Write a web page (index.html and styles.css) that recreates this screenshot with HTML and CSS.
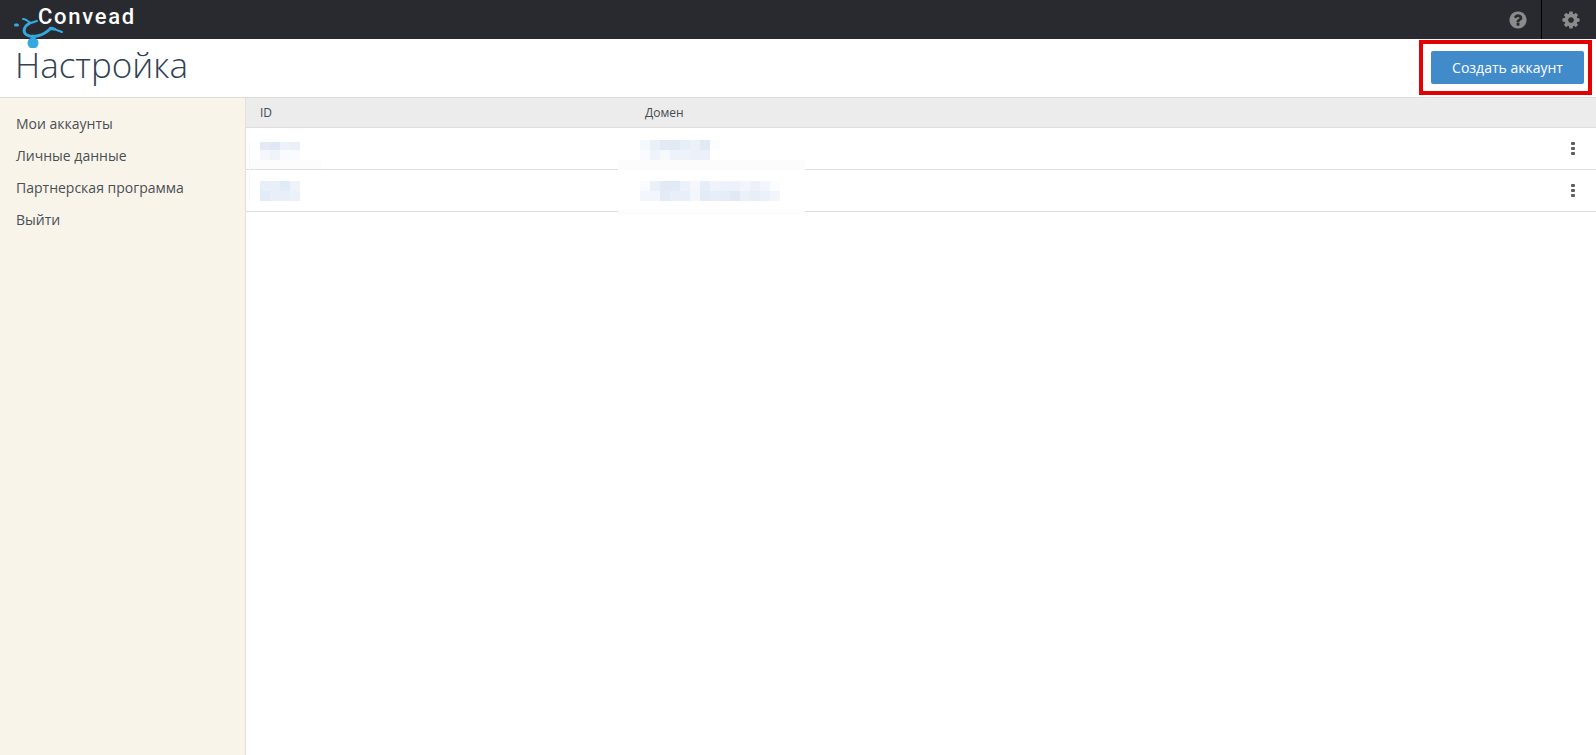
FILE: index.html
```html
<!DOCTYPE html>
<html lang="ru">
<head>
<meta charset="utf-8">
<title>Настройка</title>
<link rel="stylesheet" href="styles.css">
</head>
<body>
<header class="topbar">
  <a class="logo">
    <svg class="logo-mark" width="56" height="48" viewBox="0 0 56 48">
      <g class="logo-strokes">
        <path d="M4.5 25h2"/>
        <path d="M12 19c3 0 5 2 7 4 2 0 4-1 7-2" class="thin"/>
        <path d="M19 23c-6 3-8 9-3 12 6 3 16 1 23-6"/>
        <path d="M39 29c4 0 8 1 12 3" class="thin"/>
        <path d="M39 28c1-1 3 0 5 1" class="thin"/>
        <path d="M22 36v6"/>
      </g>
      <circle class="logo-dot" cx="22" cy="43" r="5.5"/>
    </svg>
    <span class="logo-text">Convead</span>
  </a>
  <div class="top-actions">
    <div class="top-btn">
      <svg width="20" height="20" viewBox="0 0 1792 1792"><path d="M1024 1376v-192q0-14-9-23t-23-9h-192q-14 0-23 9t-9 23v192q0 14 9 23t23 9h192q14 0 23-9t9-23zm256-672q0-88-55.5-163t-138.5-116-170-41q-243 0-371 213-15 24 8 42l132 100q7 6 19 6 16 0 25-12 53-68 86-92 34-24 86-24 48 0 85.5 26t37.5 59q0 38-20 61t-68 45q-63 28-115.5 86.5t-52.5 125.5v36q0 14 9 23t23 9h192q14 0 23-9t9-23q0-19 21.5-49.5t54.5-49.5q32-18 49-28.5t46-35 44.5-48 28-60.5 12.5-81zm384 192q0 209-103 385.5t-279.5 279.5-385.5 103-385.5-103-279.5-279.5-103-385.5 103-385.5 279.5-279.5 385.5-103 385.5 103 279.5 279.5 103 385.5z"/></svg>
    </div>
    <div class="top-btn top-btn-last">
      <svg width="20" height="20" viewBox="0 0 1792 1792"><path d="M1152 896q0-106-75-181t-181-75-181 75-75 181 75 181 181 75 181-75 75-181zm512-109v222q0 12-8 23t-20 13l-185 28q-19 54-39 91 35 50 107 138 10 12 10 25t-9 23q-27 37-99 108t-94 71q-12 0-26-9l-138-108q-44 23-91 38-16 136-29 186-7 28-36 28h-222q-14 0-24.5-8.5t-11.5-21.5l-28-184q-49-16-90-37l-141 107q-10 9-25 9-14 0-25-11-126-114-165-168-7-10-7-23 0-12 8-23 15-21 51-66.5t54-70.5q-27-50-41-99l-183-27q-13-2-21-12.5t-8-23.5v-222q0-12 8-23t19-13l186-28q14-46 39-92-40-57-107-138-10-12-10-24 0-10 9-23 26-36 98.5-107.5t94.5-71.5q13 0 26 10l138 107q44-23 91-38 16-136 29-186 7-28 36-28h222q14 0 24.5 8.5t11.5 21.5l28 184q49 16 90 37l142-107q9-9 24-9 13 0 25 10 129 119 165 170 7 8 7 22 0 12-8 23-15 21-51 66.5t-54 70.5q26 50 41 98l183 28q13 2 21 12.5t8 23.5z"/></svg>
    </div>
  </div>
</header>

<section class="titlebar">
  <h1 class="title">Настройка</h1>
  <div class="highlight">
    <button class="primary">Создать аккаунт</button>
  </div>
</section>

<div class="main">
  <nav class="sidebar">
    <a class="nav-item">Мои аккаунты</a>
    <a class="nav-item">Личные данные</a>
    <a class="nav-item">Партнерская программа</a>
    <a class="nav-item">Выйти</a>
  </nav>
  <div class="content">
    <div class="row head">
      <div class="col-id">ID</div>
      <div class="col-domain">Домен</div>
    </div>
    <div class="row body-row row-first">
      <div class="col-id">
        <svg class="mosaic" width="40" height="20" viewBox="0 0 40 20" shape-rendering="crispEdges">
          <rect y="2" width="10" height="8" fill="#e3eaf6"/><rect x="10" y="2" width="10" height="8" fill="#e1e8f5"/><rect x="20" y="2" width="10" height="8" fill="#edf2fa"/><rect x="30" y="2" width="10" height="8" fill="#e9f0f8"/>
          <rect y="10" width="10" height="10" fill="#f5f7fc"/><rect x="10" y="10" width="10" height="10" fill="#f0f3fa"/><rect x="20" y="10" width="10" height="10" fill="#fafbfe"/><rect x="30" y="10" width="10" height="10" fill="#fafbfe"/>
        </svg>
      </div>
      <div class="col-domain">
        <svg class="mosaic" width="80" height="20" viewBox="0 0 80 20" shape-rendering="crispEdges">
          <rect width="10" height="10" fill="#f5f8fc"/><rect x="10" width="10" height="10" fill="#e9f0f8"/><rect x="20" width="10" height="10" fill="#e3eaf6"/><rect x="30" width="10" height="10" fill="#e1e9f5"/><rect x="40" width="10" height="10" fill="#e8eef8"/><rect x="50" width="10" height="10" fill="#ecf1f9"/><rect x="60" width="10" height="10" fill="#e1e9f5"/><rect x="70" width="10" height="10" fill="#fcfdfe"/>
          <rect y="10" width="10" height="10" fill="#fafbfe"/><rect x="10" y="10" width="10" height="10" fill="#eff3fb"/><rect x="20" y="10" width="10" height="10" fill="#f7f9fd"/><rect x="30" y="10" width="10" height="10" fill="#eef2fa"/><rect x="40" y="10" width="10" height="10" fill="#eef2fa"/><rect x="50" y="10" width="10" height="10" fill="#ebf0f9"/><rect x="60" y="10" width="10" height="10" fill="#ebf0f9"/>
        </svg>
      </div>
      <div class="kebab"><i></i><i></i><i></i></div>
      <span class="smudge smudge-id"></span>
      <span class="smudge smudge-line"></span>
      <span class="smudge smudge-domain"></span>
    </div>
    <div class="row body-row">
      <div class="col-id">
        <svg class="mosaic" width="40" height="20" viewBox="0 0 40 20" shape-rendering="crispEdges">
          <rect width="10" height="10" fill="#e8eff9"/><rect x="10" width="10" height="10" fill="#e8eff9"/><rect x="20" width="10" height="10" fill="#e1ebf7"/><rect x="30" width="10" height="10" fill="#eef2f9"/>
          <rect y="10" width="10" height="10" fill="#e3ebf7"/><rect x="10" y="10" width="10" height="10" fill="#e8eff9"/><rect x="20" y="10" width="10" height="10" fill="#e8eff9"/><rect x="30" y="10" width="10" height="10" fill="#ebf1f9"/>
        </svg>
      </div>
      <div class="col-domain">
        <svg class="mosaic" width="140" height="20" viewBox="0 0 140 20" shape-rendering="crispEdges">
          <rect width="10" height="10" fill="#fafbfe"/><rect x="10" width="10" height="10" fill="#e9f0f8"/><rect x="20" width="20" height="10" fill="#e2eaf6"/><rect x="40" width="10" height="10" fill="#edf2fa"/><rect x="50" width="10" height="10" fill="#f5f7fc"/><rect x="60" width="10" height="10" fill="#e6edf8"/><rect x="70" width="10" height="10" fill="#f0f4fa"/><rect x="80" width="20" height="10" fill="#edf2fa"/><rect x="100" width="10" height="10" fill="#f2f5fb"/><rect x="110" width="10" height="10" fill="#ebf0f9"/><rect x="120" width="10" height="10" fill="#f2f5fb"/><rect x="130" width="10" height="10" fill="#fbfcfe"/>
          <rect y="10" width="20" height="10" fill="#f3f6fc"/><rect x="20" y="10" width="10" height="10" fill="#e3ebf6"/><rect x="30" y="10" width="20" height="10" fill="#e9eff9"/><rect x="50" y="10" width="10" height="10" fill="#f3f6fc"/><rect x="60" y="10" width="10" height="10" fill="#e3ebf6"/><rect x="70" y="10" width="10" height="10" fill="#e8eef8"/><rect x="80" y="10" width="10" height="10" fill="#e6edf8"/><rect x="90" y="10" width="10" height="10" fill="#e0e9f5"/><rect x="100" y="10" width="10" height="10" fill="#ebf0f9"/><rect x="110" y="10" width="10" height="10" fill="#e8eef8"/><rect x="120" y="10" width="10" height="10" fill="#ecf1f9"/><rect x="130" y="10" width="10" height="10" fill="#f2f5fb"/>
        </svg>
      </div>
      <div class="kebab"><i></i><i></i><i></i></div>
      <span class="smudge smudge-domain smudge-low"></span>
    </div>
  </div>
</div>
</body>
</html>
```

FILE: styles.css
```css
* { box-sizing: border-box; }
html, body { height: 100%; }
body {
  margin: 0;
  height: 755px;
  overflow: hidden;
  display: flex;
  flex-direction: column;
  background: #fff;
  font-family: "Open Sans", "Noto Sans", sans-serif;
  font-size: 14px;
  color: #444b52;
}
.topbar {
  height: 39px;
  flex: none;
  background: #292a30;
  display: flex;
  justify-content: space-between;
  position: relative;
}
.logo { position: relative; display: block; }
.logo-mark { position: absolute; left: 11px; top: 0; }
.logo-strokes path { fill: none; stroke: #35a9de; stroke-width: 3; stroke-linecap: round; stroke-linejoin: round; }
.logo-strokes path.thin { stroke-width: 2; }
.logo-dot { fill: #35a9de; }
.logo-text {
  position: absolute;
  left: 38px;
  top: 2px;
  font-family: Roboto, "Liberation Sans", sans-serif;
  font-weight: 500;
  font-size: 22px;
  line-height: 29px;
  letter-spacing: 1.7px;
  color: #fff;
}
.top-actions { display: flex; }
.top-btn {
  width: 53px;
  padding-left: 6px;
  display: flex;
  align-items: center;
  justify-content: center;
  fill: #8b8b8b;
}
.top-btn-last { border-left: 1px solid #000; width: 55px; padding-left: 4px; }
.titlebar {
  height: 59px;
  flex: none;
  display: flex;
  justify-content: space-between;
  align-items: flex-start;
  border-bottom: 1px solid #dcdcdc;
  padding: 0 4px 0 15px;
}
.title {
  margin: 0;
  font-weight: 300;
  font-size: 35px;
  line-height: 52px;
  color: #2f4254;
}
.highlight {
  margin-top: 1px;
  width: 173px;
  height: 55px;
  border: 4px solid #e30000;
  padding: 7px 4px 0 8px;
}
.primary {
  display: block;
  width: 153px;
  height: 33px;
  border: 0;
  border-radius: 2px;
  background: #428bcb;
  color: #fff;
  font: 14px "Open Sans", sans-serif;
  padding: 0;
}
.main { flex: 1; display: flex; min-height: 0; }
.sidebar {
  width: 246px;
  flex: none;
  background: #f8f4e9;
  border-right: 1px solid #e8e0d5;
  padding: 10px 16px;
  display: flex;
  flex-direction: column;
}
.nav-item { height: 32px; line-height: 32px; color: #4a4f55; }
.content { flex: 1; min-width: 0; }
.row {
  position: relative;
  display: flex;
  align-items: center;
  border-bottom: 1px solid #dedede;
}
.head {
  height: 30px;
  background: #ececec;
  font-size: 12px;
}
.head .col-domain { padding-left: 13px; }
.body-row { height: 42px; }
.row-first .mosaic { margin-top: 3px; }
.col-id { width: 386px; padding-left: 14px; flex: none; }
.col-domain { flex: 1; padding-left: 8px; }
.mosaic { display: block; }
.kebab {
  width: 4px;
  margin-right: 21px;
  display: flex;
  flex-direction: column;
  gap: 2px;
}
.kebab i { width: 4px; height: 3px; background: #5a5f66; border-radius: 1px; }
.smudge {
  position: absolute;
  background: #fcfcfc;
  height: 10px;
}
.smudge-id { left: 3px; width: 72px; bottom: 0; height: 9px; }
.smudge-line { left: 3px; width: 1px; top: 14px; height: 58px; background: #f7f7f7; }
.smudge-domain { left: 372px; width: 187px; bottom: -1px; }
.smudge-low { bottom: -4px; height: 5px; }
```
